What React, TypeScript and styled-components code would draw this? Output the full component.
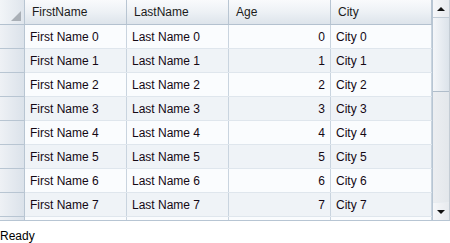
import styled, { createGlobalStyle } from "styled-components";

type Person = {
  firstName: string;
  lastName: string;
  age: number;
  city: string;
};

const COLUMNS = [
  { key: "firstName", title: "FirstName", align: "left" },
  { key: "lastName", title: "LastName", align: "left" },
  { key: "age", title: "Age", align: "right" },
  { key: "city", title: "City", align: "left" },
] as const;

const PEOPLE: Person[] = Array.from({ length: 8 }, (_, i) => ({
  firstName: `First Name ${i}`,
  lastName: `Last Name ${i}`,
  age: i,
  city: `City ${i}`,
}));

const TEMPLATE = "25px 102px 102px 102px 101px";

const GlobalStyle = createGlobalStyle`
  html, body {
    margin: 0;
    padding: 0;
    background: #ffffff;
  }
  body {
    font-family: "Liberation Sans", Arial, sans-serif;
    font-size: 12px;
    color: #000;
  }
`;

export default function App() {
  return (
    <>
      <GlobalStyle />
      <Window>
        <Grid>
          <Viewport>
            <HeaderRow>
              <Corner>
                <CornerTriangle />
              </Corner>
              {COLUMNS.map((col) => (
                <HeaderCell key={col.key}>{col.title}</HeaderCell>
              ))}
            </HeaderRow>
            {PEOPLE.map((p, i) => (
              <Row key={i} $alt={i % 2 === 1}>
                <RowHeader />
                {COLUMNS.map((col) => (
                  <Cell key={col.key} $align={col.align}>
                    {p[col.key]}
                  </Cell>
                ))}
              </Row>
            ))}
            {/* next row, scrolled mostly out of view */}
            <Row $alt={false}>
              <RowHeader />
              {COLUMNS.map((col) => (
                <Cell key={col.key} $align={col.align} />
              ))}
            </Row>
          </Viewport>
          <ScrollBar>
            <ScrollButton>
              <Arrow $dir="up" />
            </ScrollButton>
            <Thumb />
            <Track />
            <ScrollButton $bottom>
              <Arrow $dir="down" />
            </ScrollButton>
          </ScrollBar>
        </Grid>
        <StatusBar>Ready</StatusBar>
      </Window>
    </>
  );
}

const Window = styled.div`
  width: 450px;
  height: 243px;
  display: flex;
  flex-direction: column;
  background: #fff;
`;

const Grid = styled.div`
  display: flex;
  height: 221px;
  flex-shrink: 0;
  border-bottom: 1px solid #b7c5d3;
  box-sizing: border-box;
`;

const Viewport = styled.div`
  width: 432px;
  overflow: hidden;
  background: #fafcfe;
`;

const HeaderRow = styled.div`
  display: grid;
  grid-template-columns: ${TEMPLATE};
  height: 25px;
  border-bottom: 1px solid #b3c1cf;
  box-sizing: border-box;
  background: linear-gradient(to bottom, #f9fafc 0%, #edf1f5 50%, #dde4eb 100%);
`;

const Corner = styled.div`
  position: relative;
  border-right: 1px solid #b8c5d2;
  background: linear-gradient(to right, #f2f5f8, #dfe5ec);
`;

const CornerTriangle = styled.div`
  position: absolute;
  right: 3px;
  bottom: 3px;
  width: 0;
  height: 0;
  border-left: 10px solid transparent;
  border-bottom: 10px solid #a9afb6;
`;

const HeaderCell = styled.div`
  display: flex;
  align-items: center;
  padding: 0 0 1px 7px;
  border-right: 1px solid #b8c5d2;
  color: #1b1b1b;
  white-space: nowrap;
`;

const Row = styled.div<{ $alt: boolean }>`
  display: grid;
  grid-template-columns: ${TEMPLATE};
  height: 24px;
  border-bottom: 1px solid #dfe6ed;
  box-sizing: border-box;
  background: ${(p) => (p.$alt ? "#eff3f7" : "#fafcfe")};
`;

const RowHeader = styled.div`
  border-right: 1px solid #b8c5d2;
  border-bottom: 1px solid #b8c5d2;
  margin-bottom: -1px;
  background: linear-gradient(to right, #eef1f5, #dbe2ea);
`;

const Cell = styled.div<{ $align: "left" | "right" }>`
  display: flex;
  align-items: center;
  justify-content: ${(p) => (p.$align === "right" ? "flex-end" : "flex-start")};
  padding: 0 5px;
  border-right: 1px solid #c9d4df;
  color: #140814;
  white-space: nowrap;
  overflow: hidden;
`;

const ScrollBar = styled.div`
  width: 18px;
  display: flex;
  flex-direction: column;
  border-left: 1px solid #b7c5d3;
  border-right: 1px solid #c4ccd4;
  box-sizing: border-box;
  background: linear-gradient(to right, #eceef1, #e3e7eb);
`;

const ScrollButton = styled.div<{ $bottom?: boolean }>`
  height: 18px;
  flex-shrink: 0;
  display: flex;
  align-items: center;
  justify-content: center;
  box-sizing: border-box;
  border-top: ${(p) => (p.$bottom ? "1px solid #e8ecf0" : "none")};
  border-bottom: ${(p) => (p.$bottom ? "none" : "1px solid #c2ccd6")};
  background: linear-gradient(to right, #f6f7f9, #e7eaee);
`;

const Arrow = styled.div<{ $dir: "up" | "down" }>`
  width: 0;
  height: 0;
  border-left: 4px solid transparent;
  border-right: 4px solid transparent;
  ${(p) =>
    p.$dir === "up"
      ? "border-bottom: 4px solid #111;"
      : "border-top: 4px solid #111;"}
`;

const Thumb = styled.div`
  height: 74px;
  flex-shrink: 0;
  border-bottom: 1px solid #b0bdca;
  box-sizing: border-box;
  background: linear-gradient(to right, #f4f6f9, #dce3ea);
`;

const Track = styled.div`
  flex: 1;
`;

const StatusBar = styled.div`
  flex: 1;
  padding: 8px 0 0 0;
  line-height: 14px;
  color: #000;
`;
